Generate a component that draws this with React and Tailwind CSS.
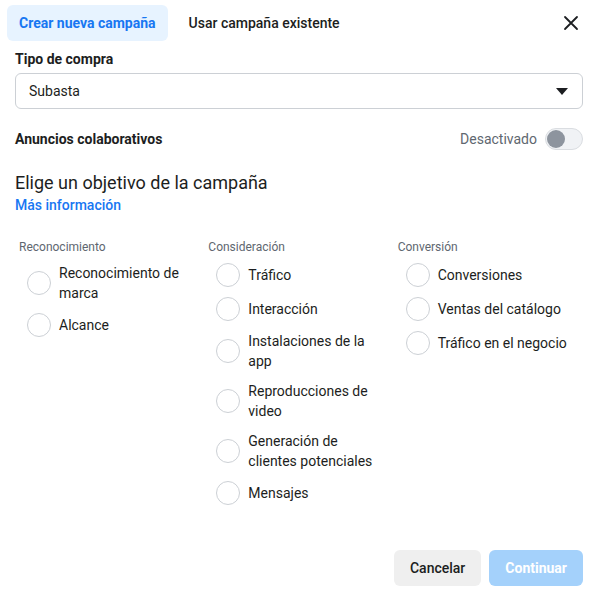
import { useState } from 'react';

const columns = [
  {
    title: 'Reconocimiento',
    items: ['Reconocimiento de marca', 'Alcance'],
  },
  {
    title: 'Consideración',
    items: [
      'Tráfico',
      'Interacción',
      'Instalaciones de la app',
      'Reproducciones de video',
      'Generación de clientes potenciales',
      'Mensajes',
    ],
  },
  {
    title: 'Conversión',
    items: ['Conversiones', 'Ventas del catálogo', 'Tráfico en el negocio'],
  },
];

const Radio = ({ label }) => (
  <label className="flex items-center gap-2 pl-3 py-[5px] cursor-pointer">
    <span className="w-6 h-6 shrink-0 rounded-full border border-[#ccd0d5] bg-white" />
    <span className="max-w-[136px] text-sm leading-5 text-[#1c1e21]">{label}</span>
  </label>
);

const App = () => {
  const [tab, setTab] = useState('new');
  const [collab, setCollab] = useState(false);

  return (
    <div className="w-[597px] h-[596px] bg-white flex flex-col font-['Roboto','Liberation_Sans',sans-serif] text-[#1c1e21]">
      {/* Tabs */}
      <div className="flex items-center justify-between pl-[7px] pr-[14px] pt-[5px]">
        <div className="flex items-center gap-[9px]">
          <button
            onClick={() => setTab('new')}
            className={`h-[36px] px-3 rounded-md text-sm font-bold ${
              tab === 'new' ? 'bg-[#e7f3ff] text-[#1877f2]' : 'text-[#1c1e21]'
            }`}
          >
            Crear nueva campaña
          </button>
          <button
            onClick={() => setTab('existing')}
            className={`h-[36px] px-3 rounded-md text-sm font-medium ${
              tab === 'existing' ? 'bg-[#e7f3ff] text-[#1877f2]' : 'text-[#1c1e21]'
            }`}
          >
            Usar campaña existente
          </button>
        </div>
        <button className="w-6 h-6 flex items-center justify-center text-[#1c1e21]">
          <svg width="16" height="16" viewBox="0 0 16 16" fill="none" stroke="currentColor" strokeWidth="1.8" strokeLinecap="round">
            <path d="M2 2 L14 14 M14 2 L2 14" />
          </svg>
        </button>
      </div>

      <div className="flex flex-col flex-1 pl-[15px] pr-[14px]">
        {/* Tipo de compra */}
        <div className="mt-[8px] text-sm leading-5 font-bold">Tipo de compra</div>
        <div className="mt-1 h-[36px] flex items-center justify-between pl-[13px] pr-[14px] rounded-md border border-[#ccd0d5]">
          <span className="text-sm">Subasta</span>
          <svg width="12" height="7" viewBox="0 0 12 7">
            <path d="M0 0 H12 L6 7 Z" fill="#1c1e21" />
          </svg>
        </div>

        {/* Anuncios colaborativos */}
        <div className="mt-[19px] h-[22px] flex items-center justify-between">
          <span className="text-sm font-bold">Anuncios colaborativos</span>
          <div className="flex items-center gap-2">
            <span className="text-sm text-[#606770]">Desactivado</span>
            <button
              onClick={() => setCollab(!collab)}
              className="w-[38px] h-[22px] rounded-full border border-[#dadde1] bg-[#f0f2f5] flex items-center px-[1px]"
            >
              <span className="w-[18px] h-[18px] rounded-full bg-[#8d949e]" />
            </button>
          </div>
        </div>

        {/* Objetivo */}
        <h2 className="mt-[21px] text-[18px] leading-6 font-normal">Elige un objetivo de la campaña</h2>
        <a className="text-sm leading-5 text-[#1877f2] font-medium cursor-pointer">Más información</a>

        <div className="mt-[24px] grid grid-cols-3">
          {columns.map(col => (
            <div key={col.title} className="flex flex-col">
              <div className="pl-1 text-xs leading-4 text-[#606770] mb-[3px]">{col.title}</div>
              {col.items.map(item => (
                <Radio key={item} label={item} />
              ))}
            </div>
          ))}
        </div>

        {/* Footer */}
        <div className="mt-auto mb-[10px] flex justify-end gap-2">
          <button className="h-[36px] px-4 rounded-md bg-[#efefef] text-sm font-medium text-[#1c1e21]">
            Cancelar
          </button>
          <button className="h-[36px] px-4 rounded-md bg-[#a4d1fb] text-sm font-bold text-white">
            Continuar
          </button>
        </div>
      </div>
    </div>
  );
};

export default App;
